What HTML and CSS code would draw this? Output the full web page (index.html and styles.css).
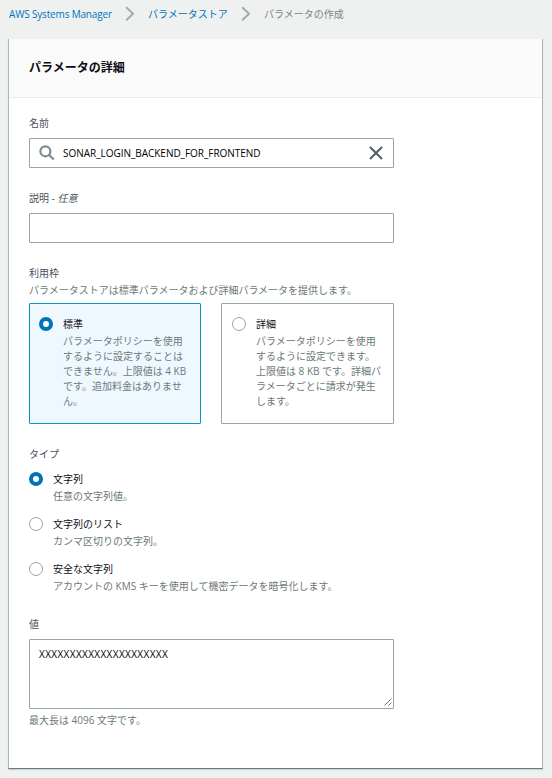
FILE: index.html
```html
<!DOCTYPE html>
<html lang="ja">
<head>
<meta charset="utf-8">
<title>パラメータの作成</title>
<link rel="stylesheet" href="styles.css">
</head>
<body>
<nav class="breadcrumb">
  <a class="crumb crumb-root">AWS Systems Manager</a>
  <svg class="chevron" viewBox="0 0 10 16"><path d="M1.2 1.3 8 7.7 1.2 14.2"/></svg>
  <a class="crumb crumb-store">パラメータストア</a>
  <svg class="chevron" viewBox="0 0 10 16"><path d="M1.2 1.3 8 7.7 1.2 14.2"/></svg>
  <span class="crumb crumb-current">パラメータの作成</span>
</nav>
<main class="card">
  <header class="card-header"><h1>パラメータの詳細</h1></header>
  <form class="form">
    <section class="field">
      <div class="label">名前</div>
      <div class="input">
        <svg class="search" viewBox="0 0 16 16"><circle cx="6.4" cy="6.3" r="5"/><path d="m10 10 4.8 4.5"/></svg>
        <span class="name-value">SONAR_LOGIN_BACKEND_FOR_FRONTEND</span>
        <svg class="clear" viewBox="0 0 14 14"><path d="m1 1 12 12M13 1 1 13"/></svg>
      </div>
    </section>
    <section class="field">
      <div class="label">説明 - <i>任意</i></div>
      <div class="input"></div>
    </section>
    <section class="field">
      <div class="label">利用枠</div>
      <div class="hint tier-hint">パラメータストアは標準パラメータおよび詳細パラメータを提供します。</div>
      <div class="tiles">
        <div class="tile selected">
          <span class="radio checked"></span>
          <div>
            <div class="title">標準</div>
            <div class="hint">パラメータポリシーを使用<br>するように設定することは<br>できません。上限値は 4 KB<br>です。追加料金はありませ<br>ん。</div>
          </div>
        </div>
        <div class="tile">
          <span class="radio"></span>
          <div>
            <div class="title">詳細</div>
            <div class="hint">パラメータポリシーを使用<br>するように設定できます。<br>上限値は 8 KB です。詳細パ<br>ラメータごとに請求が発生<br>します。</div>
          </div>
        </div>
      </div>
    </section>
    <section class="field">
      <div class="label">タイプ</div>
      <div class="options">
        <div class="option">
          <span class="radio checked"></span>
          <div><div class="title">文字列</div><div class="hint">任意の文字列値。</div></div>
        </div>
        <div class="option">
          <span class="radio"></span>
          <div><div class="title">文字列のリスト</div><div class="hint">カンマ区切りの文字列。</div></div>
        </div>
        <div class="option">
          <span class="radio"></span>
          <div><div class="title">安全な文字列</div><div class="hint">アカウントの KMS キーを使用して機密データを暗号化します。</div></div>
        </div>
      </div>
    </section>
    <section class="field">
      <div class="label">値</div>
      <div class="textarea">
        <span class="text-value">XXXXXXXXXXXXXXXXXXXXX</span>
        <svg class="grip" viewBox="0 0 8 8"><path d="M.5 7.5l7-7M4.5 7.5l3-3"/></svg>
      </div>
      <div class="hint value-hint">最大長は 4096 文字です。</div>
    </section>
  </form>
</main>
</body>
</html>
```
FILE: styles.css
```css
* {
  box-sizing: border-box;
}

body {
  margin: 0;
  height: 778px;
  overflow: hidden;
  background: #eff1f1;
  color: #0c0e14;
  font: 10px/15px "Open Sans", "Noto Sans CJK JP", sans-serif;
  white-space: nowrap;
}

svg {
  display: block;
  flex: none;
  fill: none;
}

.breadcrumb {
  display: flex;
  align-items: center;
  height: 39px;
  padding: 0 0 11px 9px;
}

.crumb {
  color: #0073bb;
}

.crumb-root {
  width: 116px;
  font-weight: 500;
  letter-spacing: -0.17px;
}

.crumb-store {
  width: 93px;
}

.crumb-current {
  color: #7b8585;
}

.chevron {
  width: 10px;
  height: 16px;
  margin-right: 13px;
  stroke: #a0adad;
  stroke-width: 2;
}

.card {
  width: 535px;
  height: 730px;
  margin-left: 8px;
  background: #fff;
  border: 1px solid #aab7b8;
  border-top: 0;
  border-bottom-color: #687b82;
  box-shadow: 0 1px 1px #cbd2d2;
}

.card-header {
  height: 59px;
  padding: 19px 20px;
  background: #fafafa;
  border-bottom: 1px solid #eaeded;
}

h1 {
  margin: 0;
  font-size: 12px;
  line-height: 19px;
  font-weight: 700;
}

.form {
  display: flex;
  flex-direction: column;
  gap: 23px;
  width: 385px;
  padding: 18px 0 0 20px;
}

.label {
  height: 15px;
  margin-bottom: 7px;
  color: #4b525a;
}

.input {
  display: flex;
  align-items: center;
  height: 30px;
  padding: 0 10px 0 9px;
  border: 1px solid #95a5a6;
  border-radius: 1px;
}

.search {
  width: 16px;
  height: 16px;
  margin-right: 8px;
  stroke: #7f8d8d;
  stroke-width: 2.2;
}

.name-value {
  flex: 1;
  color: #000;
  font-weight: 500;
  letter-spacing: -0.03px;
}

.clear {
  width: 14px;
  height: 14px;
  stroke: #545b64;
  stroke-width: 2;
}

.hint {
  color: #6c7878;
}

.tier-hint {
  margin: -5px 0 5px;
}

.tiles {
  display: grid;
  grid-template-columns: 172px 173px;
  gap: 20px;
}

.tile {
  display: flex;
  gap: 10px;
  height: 121px;
  padding: 13px 9px;
  border: 1px solid #95a5a6;
  border-radius: 1px;
}

.tile + .tile {
  padding-left: 10px;
}

.tile.selected {
  background: #f0f8ff;
  border-color: #0998bd;
}

.radio {
  flex: none;
  width: 14px;
  height: 14px;
  border: 1px solid #95a5a6;
  border-radius: 50%;
  background: #fff;
}

.radio.checked {
  border: 4px solid #0073bb;
}

.title {
  height: 15px;
  margin-bottom: 2px;
}

.options {
  display: grid;
  gap: 13px;
  margin-top: 10px;
}

.option {
  display: flex;
  gap: 10px;
}

.textarea {
  display: flex;
  justify-content: space-between;
  height: 70px;
  padding: 7px 1px 2px 9px;
  border: 1px solid #95a5a6;
  border-radius: 1px;
}

.text-value {
  color: #000;
  font-weight: 500;
  letter-spacing: 0.37px;
}

.grip {
  width: 8px;
  height: 8px;
  align-self: flex-end;
  stroke: #555;
  stroke-width: .8;
}

.value-hint {
  margin-top: 4px;
}
```
